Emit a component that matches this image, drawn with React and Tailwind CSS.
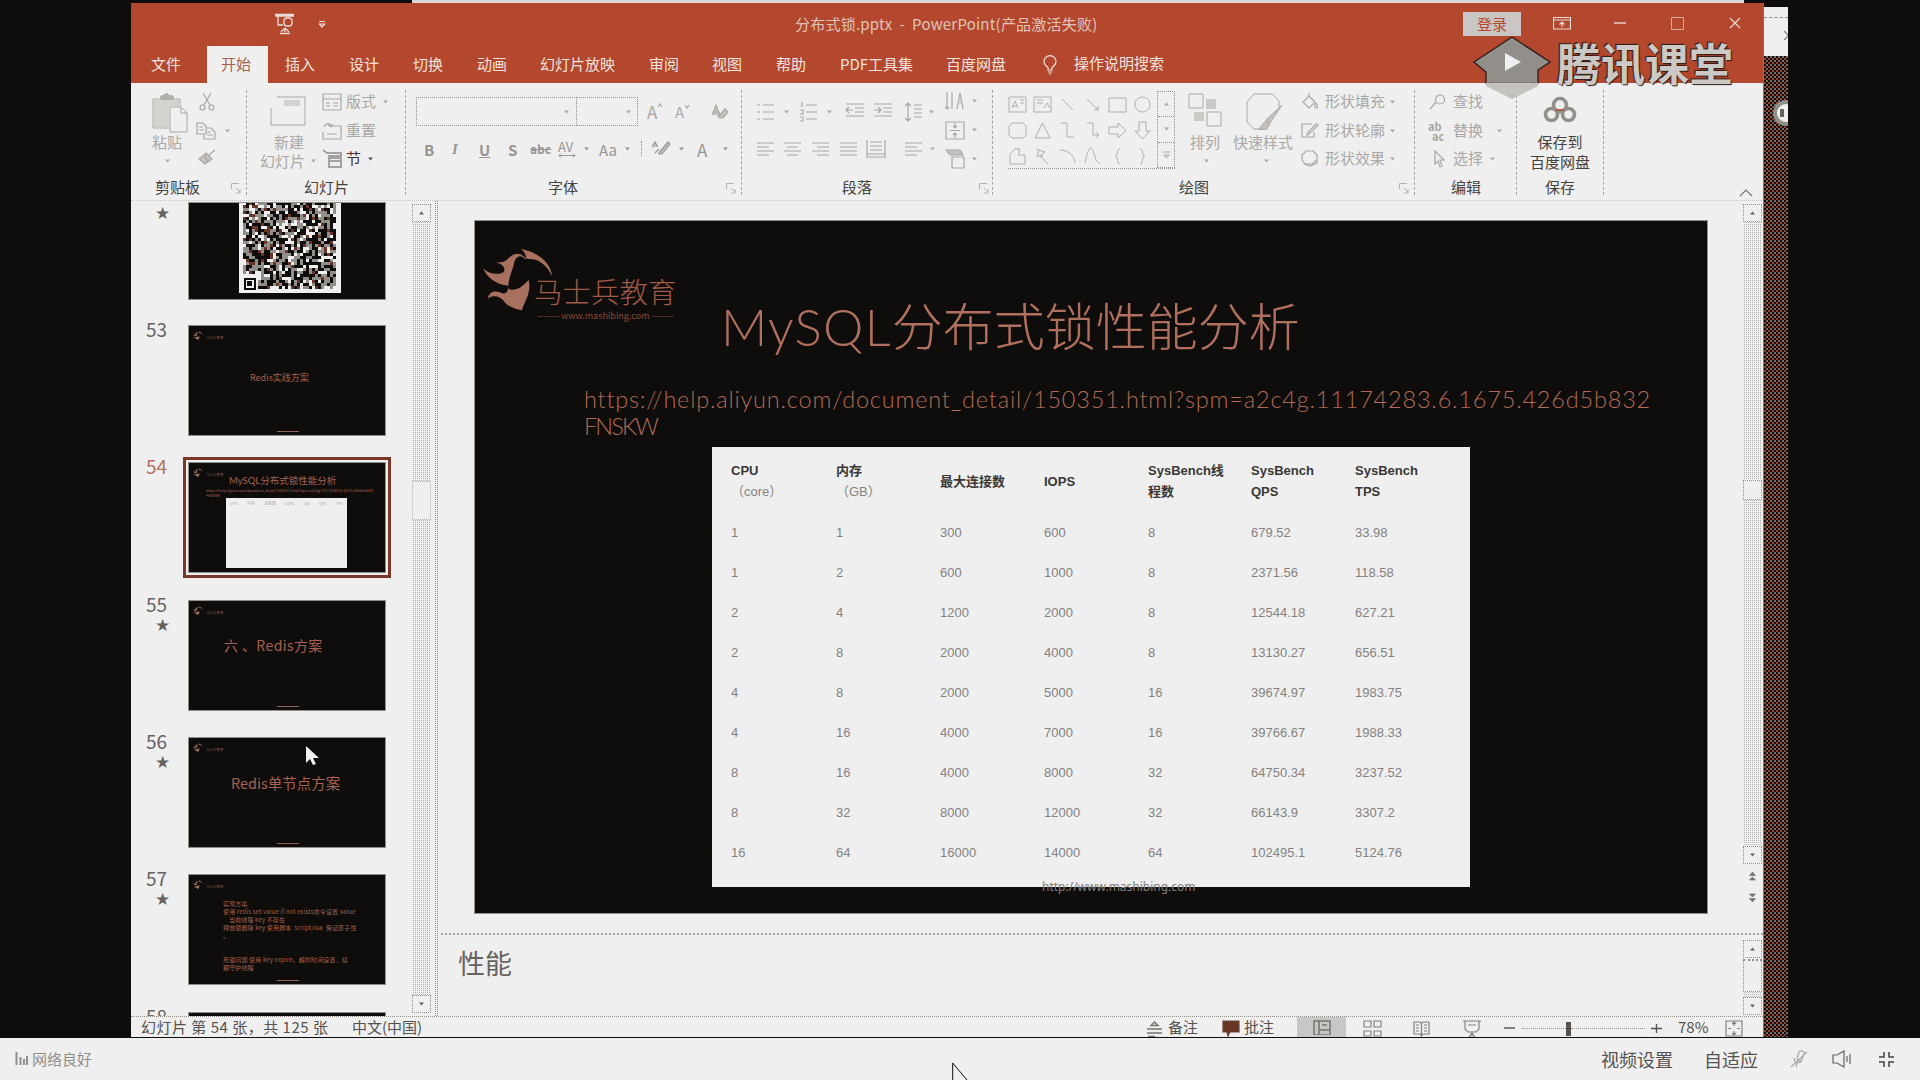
import React from "react";

const UI = "font-['Noto_Sans_CJK_SC','Noto_Sans',sans-serif]";

function Ico({ w = 20, h = 20, d, sw = 1.2, className = "", children, fill = "none" }) {
  return (
    <svg width={w} height={h} viewBox={`0 0 ${w} ${h}`} fill={fill} stroke="currentColor" strokeWidth={sw} className={`shrink-0 ${className}`}>
      {d && <path d={d} />}
      {children}
    </svg>
  );
}

function Chev({ className = "" }) {
  return (
    <svg width="7" height="4" viewBox="0 0 7 4" className={`shrink-0 ${className}`}>
      <path d="M1 0.5H6L3.5 3.5Z" fill="currentColor" />
    </svg>
  );
}

function Group({ label, className, labelClass = "", launcher, children }) {
  return (
    <div className={`flex h-[118px] shrink-0 flex-col pt-1 ${className}`}>
      <div className="flex h-[86px] text-[#aaa7a4]">{children}</div>
      <div className="flex h-[27px] items-center">
        <div className={`whitespace-nowrap text-[15px] leading-[27px] text-[#45423f] ${labelClass}`}>{label}</div>
        {launcher && (
          <Ico w={10} h={11} className={`ml-auto mt-[3px] text-[#b5b2af] ${launcher}`} sw={1} d="M.5 6V.5H8M5 5l4 4M9 6v4H5" />
        )}
      </div>
    </div>
  );
}

function Sep() {
  return <div className="mt-[7px] h-[105px] w-px shrink-0 border-l border-dashed border-[#a5a29f]" />;
}

const tabs = [
  ["文件", "w-[70px]"],
  ["开始", "w-[64px]"],
  ["插入", "w-[64px]"],
  ["设计", "w-[64px]"],
  ["切换", "w-[64px]"],
  ["动画", "w-[63px]"],
  ["幻灯片放映", "w-[109px]"],
  ["审阅", "w-[63px]"],
  ["视图", "w-[64px]"],
  ["帮助", "w-[64px]"],
  ["PDF工具集", "w-[106px]"],
  ["百度网盘", "w-[97px]"],
];

function TitleBar() {
  return (
    <div className="flex h-[43px] shrink-0 items-center text-[#ecdcd7]">
      <Ico w={20} h={22} className="-mt-[1px] ml-[144px]" sw={1.3} d="M0 1.500H19M0 3H19M3 3V12H8M10 16v3M5 20.500H15M10 15l-4 4M10 15l4 4">
        <rect x="9" y="5" width="8" height="8" rx="3" />
      </Ico>
      <Ico w={8} h={9} className="ml-[23px]" d="M1 1.500H7M1.500 4H6.500L4 7Z" />
      <div className="ml-[469px] -mt-px flex w-[305px] whitespace-pre text-[15px] leading-5 tracking-[0.220px] text-[#e0c4bb]">分布式锁.pptx  -  PowerPoint(产品激活失败)</div>
      <div className="-mt-[2px] ml-[363px] flex h-6 w-[58px] items-center justify-center bg-[#c9c6c3] text-[15px] leading-none text-[#b4482e]">登录</div>
      <Ico w={18} h={14} className="-mt-[3px] ml-[32px]" d="M.5 1.500H17.500V13H.5ZM.5 4H17.500M9 11V6M6.500 8.500L9 6l2.500 2.500" />
      <Ico w={12} h={4} className="-mt-[3px] ml-[43px]" d="M0 2H12" sw={1.4} />
      <Ico w={13} h={13} className="-mt-[3px] ml-[45px] text-[#dba798]" d="M.5 .5H12.500V12.500H.5Z" sw={1} />
      <Ico w={12} h={12} className="-mt-[3px] ml-[45px]" d="M1 1L11 11M11 1L1 11" />
    </div>
  );
}

function TabBar() {
  return (
    <div className="flex h-[37px] shrink-0 pl-[20px] text-[15px] leading-[35px] text-[#f1e2dd]">
      {tabs.map(([t, w], i) =>
        i === 1 ? (
          <div key={t} className={`${w} shrink-0`}>
            <div className="-ml-[14px] h-[37px] w-[61px] bg-[#efefef] pl-[14px] text-[#a4634f]">{t}</div>
          </div>
        ) : (
          <div key={t} className={`${w} shrink-0 whitespace-nowrap`}>{t}</div>
        )
      )}
      <Ico w={14} h={20} className="mt-[9px]" d="M5 15V12.500C3 11 1 9.500 1 6.500A6 5.800 0 0 1 13 6.500C13 9.500 11 11 9 12.500V15ZM5 17H9M6 19H8" />
      <div className="ml-[17px] whitespace-nowrap leading-[34px]">操作说明搜索</div>
    </div>
  );
}

function Clipboard() {
  return (
    <Group label="剪贴板" className="w-[115px]" labelClass="ml-[24px]" launcher="mr-[5px]">
      <div className="ml-[21px] flex w-[40px] flex-col">
        <Ico w={36} h={40} className="mt-[6px]" sw={1} d="M1 6H28V13M1 6V35H17M9 6V3H12C12 0 17 0 17 3H21V6Z">
          <path d="M18 14H29L35 20V39H18ZM29 14V20H35" fill="#efefef" />
          <path d="M2 7H27V13H17V34H2Z" fill="#d4d2cf" stroke="none" />
          <path d="M9 6V3H12C12 0 17 0 17 3H21V6Z" fill="#b5b2af" />
        </Ico>
        <div className="-mt-px text-[15px] leading-[19px]">粘贴</div>
        <Chev className="ml-[12px] mt-[8px]" />
      </div>
      <div className="ml-[4px] flex w-[40px] flex-col">
        <div className="flex h-[29px] items-center pl-[3px]">
          <Ico w={16} h={18} d="M4 0L11 12M12 0L5 12"><circle cx="3.500" cy="14.500" r="2.500" /><circle cx="12.500" cy="14.500" r="2.500" /></Ico>
        </div>
        <div className="flex h-[29px] items-center">
          <Ico w={20} h={18} d="M1 1H7L10 4V12H1ZM10 6H15L19 10V17H8V12M3 5H7M3 8H8M11 10H15M11 13H17" />
          <Chev className="ml-[8px]" />
        </div>
        <div className="-mt-[3px] flex h-[29px] items-center pl-[2px]">
          <Ico w={18} h={16} d="M17 1L11 6M8 4L14 10L10 13L6 6ZM6 6L1 10L7 15L10 12" fill="#c4c2bf" />
        </div>
      </div>
    </Group>
  );
}

function Slides() {
  const row = "flex h-[29px] items-center whitespace-nowrap text-[15px]";
  return (
    <Group label="幻灯片" className="w-[158px]" labelClass="ml-[57px]">
      <div className="ml-[13px] flex w-[62px] flex-col">
        <Ico w={36} h={30} className="ml-[10px] mt-[9px]" d="M7 1H35V29H1V12" sw={1}><path d="M14 4H30V10H14Z" fill="#d4d2cf" stroke="none" /></Ico>
        <div className="mt-[6px] pl-[14px] text-[15px] leading-[19px]">新建</div>
        <div className="flex items-center whitespace-nowrap text-[15px] leading-[20px]">幻灯片<Chev className="ml-[5px]" /></div>
      </div>
      <div className="flex flex-col">
        <div className={row}><Ico w={20} h={18} d="M1 1H19V17H1ZM1 6H19M4 10H8M11 10H16M4 13H8M11 13H16" /><span className="ml-[4px]">版式</span><Chev className="ml-[6px]" /></div>
        <div className={row}><Ico w={20} h={18} d="M7 4H19V17H1V10M2 5C4 0 9 1 9 5M9 5L11 2M9 5L6 3M5 12H15" /><span className="ml-[4px]">重置</span></div>
        <div className={`${row} -mt-px`}><Ico className="text-[#8f8c89]" w={20} h={19} d="M1 1L5 4H19V7H6M7 9H19V18H7ZM7 12H19" sw={1.5} /><span className="ml-[4px] text-[#45322d]">节</span><Chev className="ml-[6px] text-[#55524f]" /></div>
      </div>
    </Group>
  );
}

function FontGroup() {
  return (
    <Group label="字体" className="w-[335px]" labelClass="ml-[142px]" launcher="mr-[5px]">
      <div className="ml-[10px] flex flex-col pt-[10px]">
        <div className="flex h-[29px] items-center">
          <div className="flex h-[29px] w-[161px] items-center justify-end border border-dotted border-[#928f8b] pr-[6px]"><Chev /></div>
          <div className="-ml-px flex h-[29px] w-[62px] items-center justify-end border border-dotted border-[#928f8b] pr-[5px]"><Chev /></div>
          <div className="ml-[9px] flex w-[28px] text-[17px] leading-none">A<Ico w={6} h={5} d="M1 4L3 1L5 4" /></div>
          <div className="flex w-[36px] text-[15px] leading-none">A<Ico w={6} h={5} d="M1 1L3 4L5 1" /></div>
          <Ico w={18} h={18} d="M1 12L5 2L9 12M2.500 9H8M9 12L14 6L17 9L12 15H9L7 13Z" fill="#c4c2bf" />
        </div>
        <div className="mt-[3px] flex h-[40px] items-center text-[15px] leading-none text-[#989592]">
          <b className="ml-[8px] w-[28px]">B</b>
          <i className="w-[27px] font-bold font-['Liberation_Serif',serif]">I</i>
          <span className="w-[29px] font-bold underline">U</span>
          <b className="w-[22px]">S</b>
          <span className="w-[28px] text-[12px] font-bold line-through">abc</span>
          <span className="flex w-[25px] flex-col text-[13px] leading-[13px]">AV<Ico w={18} h={5} d="M1 2.500H17M3 .5L1 2.500L3 4.500M15 .5L17 2.500L15 4.500" sw={1} /></span>
          <Chev className="mr-[9px]" />
          <span className="w-[25px]">Aa</span>
          <Chev className="mr-[10px]" />
          <span className="mr-[9px] h-[16px] border-l border-dotted border-[#928f8b]" />
          <Ico w={20} h={16} d="M1 6L4 1L7 6M8 12L17 1L19 3L11 13L8 13ZM4 12L8 8" fill="#c4c2bf" />
          <Chev className="ml-[7px] mr-[12px]" />
          <span className="w-[25px] text-[17px]">A</span>
          <Chev />
        </div>
      </div>
    </Group>
  );
}

const AL = {
  left: "M0 1H17M0 5H12M0 9H17M0 13H12",
  center: "M0 1H17M3 5H14M0 9H17M3 13H14",
  right: "M0 1H17M5 5H17M0 9H17M5 13H17",
  full: "M0 1H17M0 5H17M0 9H17M0 13H17",
};

function Paragraph() {
  return (
    <Group label="段落" className="w-[250px]" labelClass="ml-[100px]" launcher="mr-[3px]">
      <div className="ml-[15px] flex w-[188px] flex-col pt-[10px]">
        <div className="flex h-[29px] items-center">
          <Ico w={17} h={18} d="M6 2H17M6 9H17M6 16H17M0 2H3M0 9H3M0 16H3" />
          <Chev className="ml-[9px] mr-[10px]" />
          <Ico w={17} h={20} d="M6 3H17M6 10H17M6 17H17M2 0V5M0 8H3V12H0M0 15H3V19H0" />
          <Chev className="ml-[9px] mr-[12px]" />
          <Ico w={19} h={18} d="M1 1H19M10 5H19M10 9H19M1 13H19M8 7H1M4 4L1 7L4 10" />
          <Ico w={19} h={18} className="ml-[9px]" d="M1 1H19M10 5H19M10 9H19M1 13H19M1 7H8M5 4L8 7L5 10" />
          <Ico w={17} h={20} className="ml-[13px]" d="M3 1V19M0 4L3 1L6 4M0 16L3 19L6 16M9 3H17M9 7H17M9 11H17M9 15H17" />
          <Chev className="ml-[6px]" />
        </div>
        <div className="mt-[3px] flex h-[40px] items-center">
          <Ico w={17} h={14} d={AL.left} />
          <Ico w={17} h={14} className="ml-[10px]" d={AL.center} />
          <Ico w={17} h={14} className="ml-[11px]" d={AL.right} />
          <Ico w={17} h={14} className="ml-[11px]" d={AL.full} />
          <Ico w={20} h={20} className="ml-[9px]" d="M1 1V19M19 1V19M4 3H16M4 7H16M4 11H16M1 15H19M1 18H19" />
          <Ico w={17} h={14} className="ml-[19px]" d={AL.left} />
          <Chev className="ml-[7px]" />
        </div>
      </div>
      <div className="flex flex-col">
        <div className="flex h-[29px] items-center"><Ico w={20} h={20} d="M2 1V18M7 1V18M12 18L15 2L18 18M13 11H17M0 16L2 18L4 16" /><Chev className="ml-[6px]" /></div>
        <div className="flex h-[29px] items-center"><Ico w={20} h={19} d="M1 1H19V18H1ZM10 2V7M8 5L10 7L12 5M10 17V12M8 14L10 12L12 14M5 9.500H15" /><Chev className="ml-[6px]" /></div>
        <div className="flex h-[29px] items-center"><Ico w={20} h={20} d="M7 8H19V19H7Z"><path d="M1 1H15L18 6H5Z" fill="#c4c2bf" /></Ico><Chev className="ml-[6px]" /></div>
      </div>
    </Group>
  );
}

const shapes = [
  "M1 2H18V17H1ZM4 13L7 6L10 13M5 11H9M12 5H16M12 8H16", "M1 2H18V17H1ZM4 5H10M4 8H10M11 13L14 8L17 13", "M4 4L15 15", "M4 4L15 15M11 15H15V11", "M1 3H18V17H1Z", "M9.500 2A7.500 7.500 0 1 1 9.400 2",
  "M4 2H15L18 5V14L15 17H4L1 14V5Z", "M9.500 2L17 17H2Z", "M3 2H9V16H16", "M4 2H10V14H16M13 11L16 14L13 17", "M1 6H10V2L18 9.500L10 17V13H1Z", "M6 1V10H2L9.500 18L17 10H13V1Z",
  "M2 7L7 2H12L10 8H17V17H2Z", "M3 2L12 5L7 9L15 17M6 3L4 9H10", "M2 3C10 3 16 8 17 16", "M2 16C6 -4 9 -2 12 10C14 16 16 16 17 16", "M12 2C8 2 11 9 7 9.500C11 10 8 17 12 17", "M7 2C11 2 8 9 12 9.500C8 10 11 17 7 17",
];

function Drawing() {
  const row = "flex h-[29px] items-center whitespace-nowrap text-[15px]";
  return (
    <Group label="绘图" className="w-[421px]" labelClass="ml-[186px]" launcher="mr-[5px]">
      <div className="ml-[15px] mt-[4px] flex h-[78px] border-b border-dotted border-[#928f8b]">
        <div className="grid grid-cols-[repeat(6,25px)] grid-rows-[repeat(3,26px)]">
          {shapes.map((d, i) => (
            <div key={i} className="flex items-center"><Ico w={19} h={19} sw={0.9} d={d} /></div>
          ))}
        </div>
        <div className="-ml-px flex w-[18px] flex-col border border-dotted border-[#928f8b]">
          <div className="flex flex-1 items-center justify-center"><Chev className="rotate-180" /></div>
          <div className="flex flex-1 items-center justify-center border-y border-dotted border-[#928f8b]"><Chev /></div>
          <div className="flex flex-1 items-center justify-center"><Ico w={7} h={8} sw={1} d="M0 1H7M1 4H6L3.500 7Z" /></div>
        </div>
      </div>
      <div className="ml-[13px] flex w-[43px] flex-col">
        <Ico w={34} h={34} className="mt-[6px]" sw={1} d="M1 1H15V15H1ZM19 19H33V33H19Z"><path d="M18 6H28V16H18ZM6 19H16V28H6Z" fill="#cbc9c6" stroke="none" /></Ico>
        <div className="mt-[5px] pl-[2px] text-[15px] leading-[19px]">排列</div>
        <Chev className="ml-[15px] mt-[8px]" />
      </div>
      <div className="flex w-[70px] flex-col pl-[2px]">
        <Ico w={38} h={38} className="ml-[13px] mt-[6px]" sw={1} d="M22 36H8L1 29V9L8 1H26L33 8V14"><path d="M36 12L24 30L20 27ZM20 28L24 31C22 36 16 37 12 36C17 33 16 30 20 28Z" fill="#c4c2bf" /></Ico>
        <div className="mt-px whitespace-nowrap text-[15px] leading-[19px]">快速样式</div>
        <Chev className="ml-[30px] mt-[8px]" />
      </div>
      <div className="flex flex-col">
        <div className={row}><Ico w={18} h={18} d="M8 3L14 9L8 15L2 9ZM8 3V0M15 10C17 13 17 15 15 15C14 15 13 13 15 10" /><span className="ml-[6px]">形状填充</span><Chev className="ml-[4px]" /></div>
        <div className={row}><Ico w={18} h={16} d="M13 9V14H1V1H11M17 2L8 11L6 12L7 9L15 1Z" /><span className="ml-[6px]">形状轮廓</span><Chev className="ml-[4px]" /></div>
        <div className={`${row} -mt-px`}><Ico w={18} h={17} d="M5 1H12L16 5V10L11 14H4L1 10V5ZM3 14L9 16L16 13V6" /><span className="ml-[6px]">形状效果</span><Chev className="ml-[4px]" /></div>
      </div>
    </Group>
  );
}

function Editing() {
  const row = "flex h-[29px] items-center whitespace-nowrap text-[15px]";
  return (
    <Group label="编辑" className="w-[101px]" labelClass="ml-[36px]">
      <div className="ml-[13px] flex flex-col">
        <div className={row}><Ico w={20} h={16} d="M8 8L2 15"><circle cx="12" cy="5.500" r="4.500" /></Ico><span className="ml-[5px]">查找</span></div>
        <div className={row}><span className="flex w-[20px] flex-col text-[11px] font-bold leading-[10px]"><span>ab</span><span className="pl-[4px]">ac</span></span><span className="ml-[5px]">替换</span><Chev className="ml-[13px]" /></div>
        <div className={`${row} -mt-px`}><Ico w={20} h={18} d="M7 1V14L10 11L12 17L14 16L12 10H16Z" /><span className="ml-[5px]">选择</span><Chev className="ml-[6px]" /></div>
      </div>
    </Group>
  );
}

function Save() {
  return (
    <Group label="保存" className="w-[86px]" labelClass="w-[86px] pl-[28px]">
      <div className="flex w-[86px] flex-col items-center">
        <Ico w={34} h={27} className="mt-[9px] text-[#928f8b]" sw={3.6}>
          <circle cx="17" cy="9" r="6.500" /><circle cx="8.500" cy="18.500" r="6" /><circle cx="25.500" cy="18.500" r="6" />
          <path d="M13 14L21 14" stroke="#b4482e" strokeWidth="1.500" />
        </Ico>
        <div className="mt-[9px] whitespace-nowrap text-center text-[15px] leading-[20px] text-[#45423f]">保存到<br />百度网盘</div>
      </div>
    </Group>
  );
}

function Watermark() {
  return (
    <div className="absolute left-[1473px] top-[36px] flex items-start">
      <svg width="80" height="64" viewBox="0 0 80 64">
        <path d="M13 34V50L39 63L65 50V34Z" fill="#c4c2bf" />
        <path d="M39 1L77 26L65 34V47H13V36L1 26Z" fill="#928f8b" stroke="#2a1a15" strokeWidth="1.3" />
        <path d="M13 47.500H65" stroke="#c4c2bf" strokeWidth="2" />
        <path d="M32 17L48 26L32 35Z" fill="#efefef" />
      </svg>
      <div className="ml-[4px] mt-[2px] whitespace-nowrap text-[44px] font-bold leading-[48px] text-[#cbc8c5] [text-shadow:1px_1px_1px_#2a1a15,-1px_-1px_1px_#2a1a15]">腾讯课堂</div>
    </div>
  );
}

function qrCells() {
  const out = [];
  let s = 7;
  for (let y = 0; y < 29; y++)
    for (let x = 0; x < 31; x++) {
      s = (s * 1103515245 + 12345) % 2147483648;
      const v = (s >> 12) % 10;
      if (v < 8 && !(x < 5 && y > 23)) out.push([x, y, v < 4 ? "#0e0d0b" : v < 7 ? "#928f8b" : "#6a3527"]);
    }
  return out;
}

function Qr() {
  return (
    <svg width="102" height="90" viewBox="0 0 102 90" shapeRendering="crispEdges">
      <rect width="102" height="90" fill="#efefef" />
      {qrCells().map(([x, y, c], i) => (
        <rect key={i} x={4 + x * 3} y={y * 3 - 1} width="3" height="3" fill={c} />
      ))}
      <path d="M5.500 75.500H15.500V85.500H5.500Z" fill="none" stroke="#0e0d0b" strokeWidth="2" />
      <rect x="8" y="78" width="5" height="5" fill="#0e0d0b" />
    </svg>
  );
}

function FlameLogo({ w, h, color }) {
  return (
    <svg width={w} height={h} viewBox="0 0 74 64" fill={color} className="shrink-0">
      <path d="M0 21C6 27 15 28 21 25C24 21 20 16 13 15C22 16 25 12 27 10C32 5 38 5 42 9C46 13 51 11 56 13C64 17 68 23 71 29C70 18 61 6 39 1C44 6 45 9 44 12C38 6 34 9 32 15C31 22 27 28 26 39C20 38 7 36 0 21Z" />
      <path d="M47 33C42 37 39 43 29 43C25 43 25 39 25 39C27 44 24 49 18 46C11 43 6 46 5 52C11 48 17 50 21 54C26 61 33 63 40 64C42 56 50 47 47 33Z" />
    </svg>
  );
}

function ThumbLogo() {
  return (
    <div className="absolute left-[4px] top-[5px] flex items-end">
      <FlameLogo w={10} h={9} color="#9a7468" />
      <div className="ml-[3px] text-[3.500px] leading-[5px] text-[#8c5444]">马士兵教育</div>
    </div>
  );
}

function ThumbFoot() {
  return <div className="absolute bottom-[3px] left-[88px] h-px w-[22px] bg-[#8c6459]" />;
}

const thumbBox = "relative h-[111px] w-[198px] shrink-0 overflow-hidden border border-[#928f8b] bg-[#0e0d0b] text-[#a8614e]";

function ThumbRow({ n, star, className = "", active, children }) {
  return (
    <div className={`flex shrink-0 ${className}`}>
      <div className="ml-[15px] flex w-[42px] flex-col">
        <div className={`-mt-[5px] text-[19px] leading-[18px] ${active ? "text-[#b4705d]" : "text-[#66635f]"}`}>{n}</div>
        {star && <div className="mt-[4px] pl-[9px] text-[17px] leading-[16px] text-[#66635f] font-['DejaVu_Sans',sans-serif]">★</div>}
      </div>
      {children}
    </div>
  );
}

function Thumbs() {
  return (
    <div className="flex h-[815px] w-[281px] shrink-0 flex-col overflow-hidden">
      <div className="flex h-[98px] shrink-0">
        <div className="ml-[15px] w-[42px] pl-[9px] text-[17px] leading-[24px] text-[#66635f] font-['DejaVu_Sans',sans-serif]">★</div>
        <div className="mt-px h-[98px] w-[198px] border border-[#928f8b] bg-[#0e0d0b] pl-[50px]"><Qr /></div>
      </div>
      <ThumbRow n="53" className="mt-[26px]">
        <div className={thumbBox}>
          <ThumbLogo />
          <div className="mt-[45px] pl-[61px] text-[9px] leading-[14px]">Redis实践方案</div>
          <ThumbFoot />
        </div>
      </ThumbRow>
      <ThumbRow n="54" active className="mt-[26px]">
        <div className="-ml-[5px] -mt-[5px] mb-[-4px] border-[3px] border-[#7a382a] p-[2px]">
          <div className={thumbBox}>
            <ThumbLogo />
            <div className="mt-[11px] pl-[40px] text-[9.500px] leading-[13px] whitespace-nowrap font-['Lato','Noto_Sans_CJK_SC',sans-serif]">MySQL分布式锁性能分析</div>
            <div className="ml-[17px] mt-[1px] w-[172px] text-[3.900px] leading-[5px] whitespace-nowrap font-['Lato',sans-serif]">https://help.aliyun.com/document_detail/150351.html?spm=a2c4g.11174283.6.1675.426d5b832<br />FNSKW</div>
            <div className="ml-[37px] flex h-[70px] w-[121px] justify-between bg-[#efefef] px-[4px] pt-[3px] text-[4px] leading-[4px] text-[#aaa7a4]">
              <span>CPU</span><span>内存</span><span>连接数</span><span>IOPS</span><span>Sys</span><span>QPS</span><span>TPS</span>
            </div>
          </div>
        </div>
      </ThumbRow>
      <ThumbRow n="55" star className="mt-[26px]">
        <div className={thumbBox}>
          <ThumbLogo />
          <div className="mt-[35px] pl-[35px] text-[14px] leading-[18px] tracking-[0.400px] whitespace-pre">六 、Redis方案</div>
          <ThumbFoot />
        </div>
      </ThumbRow>
      <ThumbRow n="56" star className="mt-[26px]">
        <div className={thumbBox}>
          <ThumbLogo />
          <div className="mt-[36px] pl-[42px] text-[14.500px] leading-[18px]">Redis单节点方案</div>
          <ThumbFoot />
          <svg width="15" height="21" viewBox="0 0 15 21" className="absolute left-[116px] top-[7px]"><path d="M1 1V18L5 14L8 20L11 19L8 13H14Z" fill="#efefef" /></svg>
        </div>
      </ThumbRow>
      <ThumbRow n="57" star className="mt-[26px]">
        <div className={thumbBox}>
          <ThumbLogo />
          <div className="mt-[25px] pl-[34px] text-[6px] leading-[8px] tracking-[0.150px] whitespace-pre">
            {"实现方案\n使用 redis set value if not exists命令设置 value\n    当前线程 key 不存在\n释放锁删除 key 使用脚本  script/lua  保证原子性\n。\n\n\n死锁问题 使用 key expire，超时时间设置，续\n期守护线程"}
          </div>
          <ThumbFoot />
        </div>
      </ThumbRow>
      <ThumbRow n="58" className="mt-[27px]">
        <div className={thumbBox} />
      </ThumbRow>
    </div>
  );
}

const track = "bg-[conic-gradient(#b5b3b0_25%,#efefef_0)] bg-[length:2px_2px]";
const arrowBtn = "flex h-[18px] shrink-0 items-center justify-center border border-dotted border-[#928f8b] bg-[#efefef] text-[#66635f]";

const head = [["CPU", "（core）"], ["内存", "（GB）"], ["最大连接数"], ["IOPS"], ["SysBench线", "程数"], ["SysBench", "QPS"], ["SysBench", "TPS"]];
const rows = [
  ["1", "1", "300", "600", "8", "679.52", "33.98"],
  ["1", "2", "600", "1000", "8", "2371.56", "118.58"],
  ["2", "4", "1200", "2000", "8", "12544.18", "627.21"],
  ["2", "8", "2000", "4000", "8", "13130.27", "656.51"],
  ["4", "8", "2000", "5000", "16", "39674.97", "1983.75"],
  ["4", "16", "4000", "7000", "16", "39766.67", "1988.33"],
  ["8", "16", "4000", "8000", "32", "64750.34", "3237.52"],
  ["8", "32", "8000", "12000", "32", "66143.9", "3307.2"],
  ["16", "64", "16000", "14000", "64", "102495.1", "5124.76"],
];
const cols = "grid grid-cols-[105px_104px_104px_104px_103px_104px_110px] pl-[19px]";

function Slide() {
  return (
    <div className="ml-[33px] mt-[19px] flex h-[694px] w-[1234px] flex-col border border-[#928f8b] bg-[#0e0d0b]">
      <div className="flex h-[100px] pl-[8px] pt-[26px]">
        <FlameLogo w={72} h={64} color="#a8705e" />
        <div className="-ml-[21px] mt-[26px] flex flex-col">
          <div className="text-[28.500px] font-light leading-[36px] text-[#a05a48]">马士兵教育</div>
          <div className="mt-[2px] whitespace-nowrap text-center text-[9px] leading-[10px] text-[#8c4a3a]">------- www.mashibing.com -------</div>
        </div>
      </div>
      <div className="-mt-[29px] ml-[246px] whitespace-nowrap text-[51px] font-light leading-[70px] text-[#b0705d] font-['Lato','Noto_Sans_CJK_SC',sans-serif]"><span className="tracking-[1.300px]">MySQL</span>分布式锁性能分析</div>
      <div className="mt-[24px] ml-[109px] whitespace-nowrap text-[23.500px] font-light leading-[27px] text-[#b06a55] font-['Lato',sans-serif]">
        <span className="tracking-[0.810px]">https://help.aliyun.com/document_detail/150351.html?spm=a2c4g.11174283.6.1675.426d5b832</span>
        <br />
        <span className="tracking-[-1.900px]">FNSKW</span>
      </div>
      <div className="ml-[237px] mt-[7px] h-[440px] w-[758px] bg-[#efefef] text-[13px] font-['Liberation_Sans','Noto_Sans_CJK_SC',sans-serif]">
        <div className={`${cols} h-[66px] items-center text-[#3a3835]`}>
          {head.map((h, i) => (
            <div key={i} className="pt-[2px] leading-[21px]">
              <div className="whitespace-nowrap font-bold">{h[0]}</div>
              {h[1] && <div className={i < 2 ? "text-[#85827f]" : "font-bold"}>{h[1]}</div>}
            </div>
          ))}
        </div>
        {rows.map((r, i) => (
          <div key={i} className={`${cols} h-[40px] items-center text-[#85827f]`}>
            {r.map((c, j) => <div key={j}>{c}</div>)}
          </div>
        ))}
      </div>
      <div className="-mt-[8px] ml-[567px] text-[12px] leading-[16px] text-[#85807c] font-['Noto_Sans',sans-serif]">http://www.mashibing.com</div>
    </div>
  );
}

function StatusBar() {
  return (
    <div className="flex h-[21px] shrink-0 items-center overflow-hidden border-t border-dotted border-[#928f8b] whitespace-pre text-[15px] leading-[20px] text-[#55524f]">
      <div className="ml-[10px] w-[211px] tracking-[0.500px]">幻灯片 第 54 张，共 125 张</div>
      <div className="w-[795px]">中文(中国)</div>
      <Ico w={15} h={16} className="mt-[3px] text-[#77746f]" d="M4 4.500L7.500 1L11 4.500ZM0 8H15M0 12H15M1 15.500H8" sw={1.4} />
      <span className="ml-[6px] w-[54px]">备注</span>
      <Ico w={18} h={17} className="mt-[3px] text-[#66443b]" fill="#6a3527" d="M1 1H17V12H8L6 16L5 12H1Z" />
      <span className="ml-[4px] w-[53px]">批注</span>
      <div className="flex h-[21px] w-[49px] items-center justify-center bg-[#c9c7c5]"><Ico w={18} h={15} className="text-[#77746f]" d="M1 1H17V15H1ZM6 1V15M6 10H17M9 5H14" sw={1.5} /></div>
      <Ico w={19} h={17} className="ml-[17px] mt-[3px] text-[#85827f]" d="M1 1H8V7H1ZM11 1H18V7H11ZM1 11H8V16H1ZM11 11H18V16H11Z" />
      <Ico w={17} h={17} className="ml-[31px] mt-[3px] text-[#85827f]" d="M1 2H7L8.500 3.500L10 2H16V14H10L8.500 16L7 14H1ZM8.500 3V15M3 5H6M3 8H6M3 11H6M11 5H14M11 8H14M11 11H14" />
      <Ico w={18} h={17} className="ml-[33px] mt-[3px] text-[#85827f]" d="M0 1H18M2 1V9L5 12H13L16 9V1M9 12V17M6 17L9 13L12 17M5 5H13" />
      <Ico w={11} h={4} className="ml-[23px] mt-[2px]" d="M0 2H11" sw={1.4} />
      <div className="ml-[7px] mt-[3px] flex w-[123px] items-center">
        <div className="w-[44px] border-t border-dotted border-[#928f8b]" />
        <div className="h-[14px] w-[5px] bg-[#55524f]" />
        <div className="flex-1 border-t border-dotted border-[#928f8b]" />
      </div>
      <Ico w={11} h={11} className="ml-[6px] mt-[2px]" d="M0 5.500H11M5.500 1V10" sw={1.4} />
      <span className="ml-[16px] w-[47px]">78%</span>
      <Ico w={18} h={17} className="mt-[3px] text-[#85827f]" d="M1 1H17V16H1ZM9 2V6M9 15V11M3 8.500H6M15 8.500H12M7 4L9 2L11 4M7 13L9 15L11 13" />
    </div>
  );
}

export default function App() {
  return (
    <div className={`relative flex h-[1080px] w-[1920px] flex-col overflow-hidden bg-[#0e0d0b] ${UI}`}>
      <div className="flex h-[1037px] shrink-0">
        <div className="flex w-[1633px] shrink-0 flex-col ml-[131px]">
          <div className="ml-[281px] h-[3px] w-[1332px] shrink-0 bg-[#dcdad8]" />
          <div className="flex h-[1034px] flex-col border-r border-[#77746f] bg-[#efefef]">
            <div className="flex h-[80px] shrink-0 flex-col bg-[#b4482e]">
              <TitleBar />
              <TabBar />
            </div>
            <div className="flex h-[118px] shrink-0 border-b border-dotted border-[#c9c7c5]">
              <Clipboard /><Sep /><Slides /><Sep /><FontGroup /><Sep /><Paragraph /><Sep /><Drawing /><Sep /><Editing /><Sep /><Save /><Sep />
              <Ico w={14} h={8} className="mb-[3px] ml-auto mr-[10px] self-end text-[#77746f]" d="M1 7L7 1L13 7" />
            </div>
            <div className="flex h-[815px] shrink-0">
              <Thumbs />
              <div className="flex w-[19px] shrink-0 flex-col pb-[3px] pt-[3px]">
                <div className={arrowBtn}><Chev className="rotate-180" /></div>
                <div className={`h-[259px] ${track}`} />
                <div className="h-[39px] border border-dotted border-[#b5b3b0] bg-[#efefef]" />
                <div className={`flex-1 ${track}`} />
                <div className={arrowBtn}><Chev /></div>
              </div>
              <div className="ml-[4px] mr-[3px] w-[3px] shrink-0 border-x border-dotted border-[#928f8b]" />
              <div className="flex flex-1 flex-col">
                <div className="flex h-[732px] shrink-0">
                  <Slide />
                  <div className="ml-auto mr-px mt-[3px] flex h-[700px] w-[19px] flex-col">
                    <div className={arrowBtn}><Chev className="rotate-180" /></div>
                    <div className={`h-[258px] ${track}`} />
                    <div className="h-[20px] border border-dotted border-[#928f8b] bg-[#efefef]" />
                    <div className={`h-[346px] ${track}`} />
                    <div className={arrowBtn}><Chev /></div>
                    <Ico w={9} h={10} className="mx-auto mt-[7px] text-[#66635f]" fill="#77746f" d="M1.500 4.500H7.500L4.500 1ZM1.500 9H7.500L4.500 6Z" sw={0.6} />
                    <Ico w={9} h={10} className="mx-auto mt-[12px] text-[#66635f]" fill="#77746f" d="M1.500 1H7.500L4.500 4ZM1.500 5.500H7.500L4.500 9Z" sw={0.6} />
                  </div>
                </div>
                <div className="flex flex-1 border-t-2 border-dotted border-[#a5a29f]">
                  <div className="ml-[17px] mt-[10px] text-[27px] leading-[36px] text-[#66635f]">性能</div>
                  <div className="ml-auto mr-px mt-[5px] flex h-[75px] w-[19px] flex-col">
                    <div className={arrowBtn}><Chev className="rotate-180" /></div>
                    <div className="mt-[1px] h-[34px] border border-dotted border-t-2 border-[#928f8b]" />
                    <div className={`h-[5px] ${track}`} />
                    <div className={arrowBtn}><Chev /></div>
                  </div>
                </div>
              </div>
            </div>
            <StatusBar />
          </div>
        </div>
        <div className="flex w-[24px] flex-col pt-[7px]">
          <div className="flex h-[49px] shrink-0 flex-col overflow-hidden bg-[#efefef]">
            <div className="h-[11px] border-b border-dashed border-[#928f8b]" />
            <Ico w={12} h={12} className="ml-[20px] mt-[12px] text-[#77746f]" d="M0 1L9 10M0 10L9 1" />
          </div>
          <div className="flex flex-1 overflow-hidden bg-[conic-gradient(#75706c_25%,#0e0d0b_0_50%,#9a402a_0_75%,#0e0d0b_0)] bg-[length:4px_4px]">
            <div className="ml-[9px] mt-[44px] flex h-[26px] w-[26px] shrink-0 items-center rounded-full border-4 border-[#928f8b] bg-[#efefef]">
              <div className="ml-[3px] h-[8px] w-[4px] bg-[#66635f]" />
            </div>
          </div>
        </div>
      </div>
      <div className="flex h-[43px] items-center border-t border-[#0e0d0b] bg-[#efefef] text-[#55524f]">
        <Ico w={13} h={13} className="-mt-px ml-[15px] text-[#928f8b]" d="M1.500 0V13M5.500 5V13M9 7V13M12 4V13" sw={2} />
        <div className="ml-[4px] text-[15px] leading-5 text-[#928f8b]">网络良好</div>
        <svg width="16" height="18" viewBox="0 0 16 18" className="ml-[860px] mt-auto shrink-0"><path d="M.7 18V1L15 18" fill="none" stroke="#0e0d0b" /></svg>
        <div className="ml-[633px] w-[103px] text-[18px] leading-6">视频设置</div>
        <div className="w-[86px] text-[18px] leading-6">自适应</div>
        <Ico w={18} h={18} className="text-[#aaa7a4]" d="M9 2C11 0 15 1 14 4L12 9C10 12 7 11 7 8ZM4 8C4 13 9 14 12 11M7 13L6 17M1 17L17 2" />
        <Ico w={20} h={18} className="ml-[24px] text-[#66635f]" d="M1 5V13H5L12 17V1L5 5ZM15 6V12M18 4V14" />
        <Ico w={17} h={17} className="ml-[26px] text-[#45423f]" d="M1 6H6V1M11 1V6H16M1 11H6V16M11 16V11H16" sw={1.5} />
      </div>
      <Watermark />
    </div>
  );
}
